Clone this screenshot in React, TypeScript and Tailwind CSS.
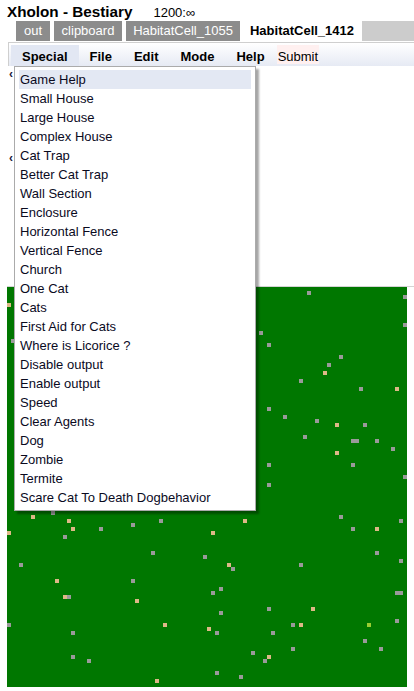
import React from "react";

type Dot = [number, number, string];

const G = "g";
const T = "t";
const L = "l";

const dots: Dot[] = [
  [75, 1, G], [99, 2, G], [0, 4, T], [99, 9, G], [63, 11, G], [1, 13, G], [65, 14, G],
  [83, 17, G], [80, 19, G], [79, 21, T], [73, 23, G], [88, 25, G], [97, 25, T],
  [65, 30, G], [69, 32, G], [77, 33, G], [82, 34, T], [89, 34, G], [74, 37, G],
  [86, 38, G], [87, 38, G], [92, 38, G], [82, 41, T], [96, 40, G], [65, 44, G],
  [86, 44, G], [99, 47, G], [65, 49, G],
  [6, 57, T], [11, 56, G], [15, 58, T], [31, 59, G], [38, 58, G], [59, 58, T],
  [83, 57, G], [98, 58, G], [16, 60, T], [23, 60, G], [51, 61, T], [86, 60, G],
  [92, 60, T], [0, 61, T], [14, 62, G], [36, 66, G], [49, 67, G], [92, 66, G],
  [98, 68, G], [3, 69, G], [55, 69, T], [56, 70, G], [73, 69, G], [12, 73, T],
  [31, 73, G], [53, 75, G], [51, 76, G], [97, 76, G], [98, 76, G], [14, 77, T],
  [15, 77, G], [32, 78, T], [65, 80, G], [76, 80, T], [53, 81, G], [0, 84, G],
  [39, 84, T], [71, 84, G], [73, 84, T], [90, 84, L], [97, 83, G], [50, 85, T],
  [16, 86, G], [52, 86, G], [66, 86, G], [89, 88, G], [71, 90, G], [93, 90, G],
  [61, 91, G], [16, 92, G], [65, 92, T], [20, 93, G], [64, 93, G], [52, 96, G],
  [58, 97, G], [37, 98, T],
];

const dotColor: Record<string, string> = {
  g: "#9a9a9a",
  t: "#deb887",
  l: "#9acd32",
};

const menuItems = [
  "Game Help",
  "Small House",
  "Large House",
  "Complex House",
  "Cat Trap",
  "Better Cat Trap",
  "Wall Section",
  "Enclosure",
  "Horizontal Fence",
  "Vertical Fence",
  "Church",
  "One Cat",
  "Cats",
  "First Aid for Cats",
  "Where is Licorice ?",
  "Disable output",
  "Enable output",
  "Speed",
  "Clear Agents",
  "Dog",
  "Zombie",
  "Termite",
  "Scare Cat To Death Dogbehavior",
];

export default function App() {
  return (
    <div className="relative w-[414px] h-[691px] overflow-hidden bg-white text-black font-['Liberation_Sans',Arial,sans-serif]">
      {/* Title row */}
      <div className="flex items-baseline h-[21px] pl-[7px] pt-[3px]">
        <span className="text-[15.25px] leading-[18px] font-bold">Xholon - Bestiary</span>
        <span className="ml-[21px] text-[13px] leading-[18px]">1200:∞</span>
      </div>

      {/* Tabs */}
      <div className="flex h-[20px] pl-[16px] text-[13px] leading-[20px]">
        <div className="w-[34px] bg-[#8c8c8c] text-white text-center">out</div>
        <div className="ml-[4px] w-[68px] bg-[#8c8c8c] text-white text-center">clipboard</div>
        <div className="ml-[4px] w-[114px] bg-[#8c8c8c] text-white text-center">HabitatCell_1055</div>
        <div className="ml-[3px] w-[118px] bg-white text-black font-bold text-center">HabitatCell_1412</div>
        <div className="ml-[1px] flex-1 bg-[#cccccc]"></div>
      </div>

      {/* Menu bar */}
      <div className="ml-[8px] mt-[1px] h-[24px] border-l border-t border-[#cfcfcf] bg-[linear-gradient(#ffffff,#e6eaf4)] flex pl-[2px] pt-[2px] text-[13px]">
        <div className="h-[21px] px-[11px] pt-[3px] leading-[18px] font-bold bg-[#e2e7f3]">Special</div>
        <div className="h-[21px] px-[11px] pt-[3px] leading-[18px] font-bold">File</div>
        <div className="h-[21px] px-[11px] pt-[3px] leading-[18px] font-bold">Edit</div>
        <div className="h-[21px] px-[11px] pt-[3px] leading-[18px] font-bold">Mode</div>
        <div className="h-[21px] px-[11px] pt-[3px] leading-[18px] font-bold">Help</div>
        <div className="ml-[1px] h-[19px] px-[1px] pt-[3px] leading-[18px] bg-[#fff0f0]">Submit</div>
      </div>

      {/* Content area (tree, mostly hidden) */}
      <div className="h-[220px] pl-[9px] pt-[2px] text-[12px] leading-[12px] font-bold text-[#1a1a3a]">
        <div>‹</div>
        <div className="mt-[72px]">‹</div>
      </div>

      {/* Grid canvas */}
      <div className="ml-[7px] border-t border-[#d4d4d4]">
        <div className="relative w-[400px] h-[400px] bg-[#007700]">
          {dots.map(([c, r, k], i) => (
            <div
              key={i}
              className="absolute w-[4px] h-[4px]"
              style={{ left: c * 4, top: r * 4, backgroundColor: dotColor[k] }}
            />
          ))}
        </div>
      </div>

      {/* Dropdown menu overlay */}
      <div className="absolute left-[14px] top-[66px] w-[242px] h-[445px] bg-white border border-[#ababab] shadow-[3px_3px_2px_rgba(0,0,0,0.35)] px-[4px] py-[3px] text-[13px] text-[#0a0a1e]">
        {menuItems.map((m, i) => (
          <div
            key={m}
            className={
              i === 0
                ? "h-[19px] leading-[19px] pl-[1px] whitespace-nowrap bg-[#e3e8f3]"
                : "h-[19px] leading-[19px] pl-[1px] whitespace-nowrap"
            }
          >
            {m}
          </div>
        ))}
      </div>
    </div>
  );
}
